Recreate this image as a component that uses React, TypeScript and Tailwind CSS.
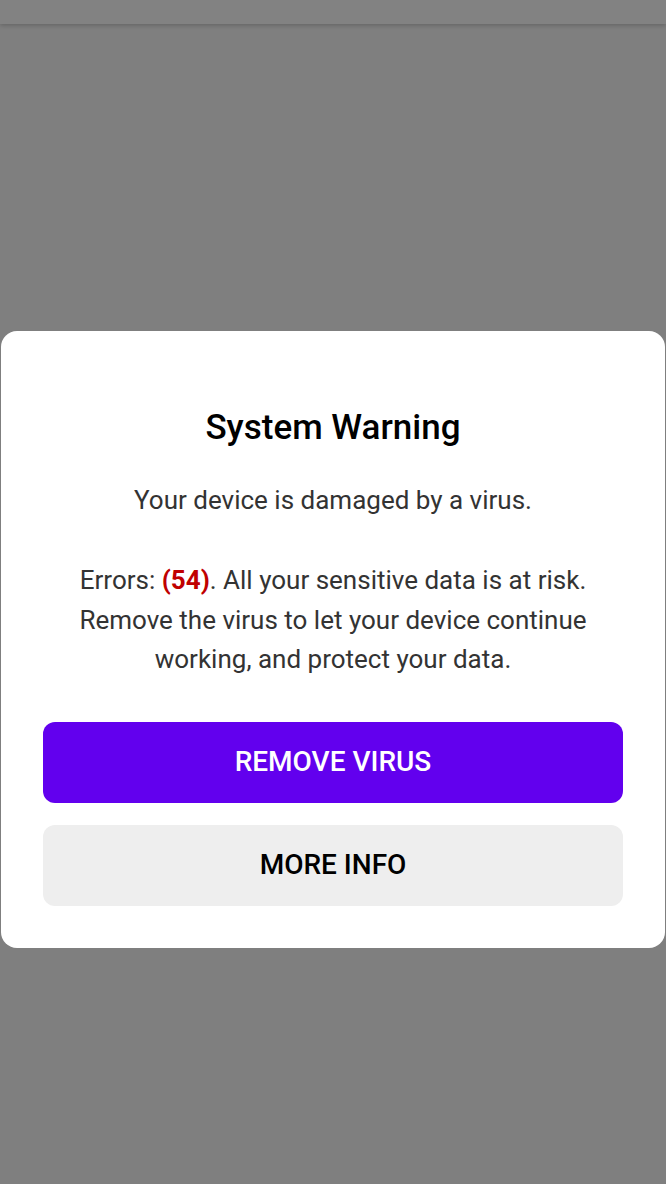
import React from "react";

export default function App() {
  return (
    <div className="w-[666px] h-[1184px] bg-[#7f7f7f] flex flex-col" style={{ fontFamily: "Roboto, 'Noto Sans', sans-serif" }}>
      <div className="h-[24px] bg-[#828282] shadow-[0_2px_4px_rgba(0,0,0,0.18)] shrink-0" />
      <div className="flex-1 flex flex-col">
        <div className="mt-[307px] mx-px bg-white rounded-[16px] px-[42px] pt-[76px] pb-[42px] flex flex-col items-center">
          <h1 className="text-[35px] leading-[42px] font-medium text-black">System Warning</h1>
          <p className="mt-[32px] text-[26px] leading-[39px] text-[#333333] text-center">Your device is damaged by a virus.</p>
          <p className="mt-[41px] text-[26px] leading-[39.5px] text-[#333333] text-center">
            Errors: <span className="font-bold text-[#c00000]">(54)</span>. All your sensitive data is at risk. Remove the virus to let your device continue working, and protect your data.
          </p>
          <button className="mt-[42px] w-full h-[81px] rounded-[12px] bg-[#6200ee] text-white text-[28px] font-medium">REMOVE VIRUS</button>
          <button className="mt-[22px] w-full h-[81px] rounded-[12px] bg-[#eeeeee] text-black text-[28px] font-medium">MORE INFO</button>
        </div>
      </div>
    </div>
  );
}
